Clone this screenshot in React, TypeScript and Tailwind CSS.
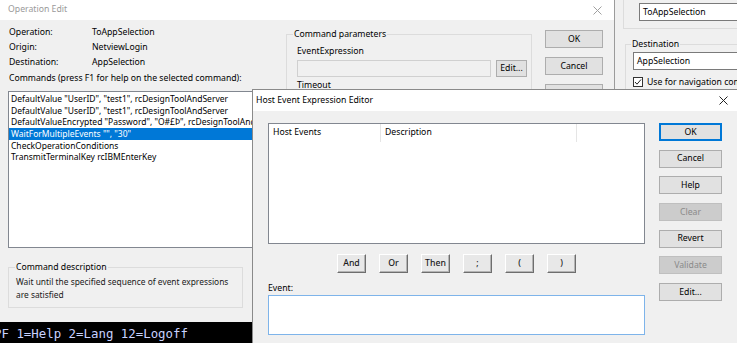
import React from "react";

const font = { fontFamily: '"Noto Sans", "Liberation Sans", sans-serif' };

function WinBtn({ label, w, disabled, def }: { label: string; w: string; disabled?: boolean; def?: boolean }) {
  const base = "h-[18px] flex items-center justify-center text-[8.7px] leading-none " + w + " ";
  if (disabled) return <div className={base + "bg-[#cccccc] border border-[#bfbfbf] text-[#8a8a8a]"}>{label}</div>;
  if (def) return <div className={base + "bg-[#e1e1e1] border-2 border-[#0078d7] text-black"}>{label}</div>;
  return <div className={base + "bg-[#e1e1e1] border border-[#adadad] text-black"}>{label}</div>;
}

function ClassicBtn({ label }: { label: string }) {
  return (
    <div className="w-[29px] h-[19px] flex items-center justify-center bg-[#e8e8e8] border-t border-l border-t-white border-l-white border-r border-b border-r-[#6e6e6e] border-b-[#6e6e6e] shadow-[inset_-1px_-1px_0_#b4b4b4] text-[8.7px] font-medium text-[#1a1a1a]">
      {label}
    </div>
  );
}

function CloseX({ color }: { color: string }) {
  return (
    <svg width="9" height="9" viewBox="0 0 9 9">
      <path d="M0.5 0.5 L8.5 8.5 M8.5 0.5 L0.5 8.5" stroke={color} strokeWidth="1" fill="none" />
    </svg>
  );
}

export default function App() {
  const items = [
    'DefaultValue "UserID", "test1", rcDesignToolAndServer',
    'DefaultValue "UserID", "test1", rcDesignToolAndServer',
    'DefaultValueEncrypted "Password", "O#£Þ", rcDesignToolAndServer',
    'WaitForMultipleEvents "", "30"',
    "CheckOperationConditions",
    "TransmitTerminalKey rcIBMEnterKey",
  ];
  return (
    <div className="relative w-[737px] h-[343px] overflow-hidden bg-black text-[8.7px]" style={font}>
      {/* terminal behind */}
      <div className="absolute inset-0 flex flex-col justify-end">
        <div
          className="h-[19px] leading-[19px] ml-[-6px] text-[12.4px] text-[#c8d2ff] whitespace-pre"
          style={{ fontFamily: '"DejaVu Sans Mono", "Liberation Mono", monospace' }}
        >
          PF 1=Help 2=Lang 12=Logoff
        </div>
      </div>

      {/* right properties panel */}
      <div className="absolute left-[615px] top-0 w-[122px] h-[89px] bg-[#f0f0f0] overflow-hidden">
        <div className="ml-[8px] w-[200px] h-[29px] border-l border-b border-[#dcdcdc] pl-[15px] pt-[3px]">
          <div className="h-[18px] border border-[#7a7a7a] bg-white leading-[16px] pl-[3px] text-black">ToAppSelection</div>
        </div>
        <fieldset className="ml-[10px] mt-[9px] w-[200px] h-[60px] border border-[#dcdcdc] pl-[7px]">
          <legend className="ml-[-2px] px-[1px] leading-[12px] text-black">Destination</legend>
          <div className="mt-[2px] h-[18px] border border-[#7a7a7a] bg-white leading-[16px] pl-[3px] text-black">AppSelection</div>
          <div className="mt-[6px] flex items-center gap-[4px]">
            <div className="w-[10px] h-[10px] border border-[#333] bg-white flex items-center justify-center">
              <svg width="8" height="8" viewBox="0 0 8 8">
                <path d="M1 4 L3 6.2 L7 1.5" stroke="#222" strokeWidth="1" fill="none" />
              </svg>
            </div>
            <span className="leading-[12px] text-black whitespace-nowrap">Use for navigation commands</span>
          </div>
        </fieldset>
      </div>

      {/* Operation Edit window */}
      <div className="absolute left-0 top-0 w-[615px] h-[322px] border-r border-[#9b9b9b] flex flex-col">
        <div className="h-[20px] bg-white flex items-center justify-between pl-[8px] text-[#9a9a9a]">
          <span>Operation Edit</span>
          <div className="w-[34px] flex justify-center">
            <CloseX color="#a0a0a0" />
          </div>
        </div>
        <div className="flex-1 bg-[#f0f0f0] flex text-black">
          {/* left column */}
          <div className="ml-[8px] w-[242px] flex flex-col pt-[5px]">
            {[
              ["Operation:", "ToAppSelection"],
              ["Origin:", "NetviewLogin"],
              ["Destination:", "AppSelection"],
            ].map(([a, b]) => (
              <div key={a} className="flex h-[15px] items-center pl-[1px]">
                <span className="w-[83px]">{a}</span>
                <span>{b}</span>
              </div>
            ))}
            <div className="mt-[2px] h-[14px] flex items-center pl-[1px] whitespace-nowrap">
              Commands (press F1 for help on the selected command):
            </div>
            <div className="mt-[5px] h-[157px] w-[250px] border border-[#828790] bg-white pt-[1px] overflow-hidden">
              {items.map((t, i) => (
                <div
                  key={i}
                  className={
                    "h-[11.7px] leading-[11.7px] pl-[2px] whitespace-nowrap text-[8.5px] " +
                    (i === 3 ? "bg-[#0078d7] text-white" : "text-black")
                  }
                >
                  {t}
                </div>
              ))}
            </div>
            <fieldset className="mt-[13px] w-[235px] h-[47px] border border-[#dcdcdc] pl-[7px]">
              <legend className="ml-[-1px] px-[1px] leading-[12px]">Command description</legend>
              <div className="mt-[2px] leading-[13px] text-[8.4px] text-[#1a1a1a]">
                Wait until the specified sequence of event expressions
                <br />
                are satisfied
              </div>
            </fieldset>
          </div>
          {/* middle group */}
          <fieldset className="ml-[36px] mt-[8px] w-[246px] h-[120px] border border-[#dcdcdc] pl-[10px] self-start">
            <legend className="ml-[-4px] px-[1px] leading-[12px]">Command parameters</legend>
            <div className="mt-[5px] h-[12px] leading-[12px]">EventExpression</div>
            <div className="mt-[3px] flex gap-[5px]">
              <div className="w-[194px] h-[17px] border border-[#d0d0d0] bg-[#f0f0f0]" />
              <div className="w-[31px] h-[17px] border border-[#adadad] bg-[#e1e1e1] flex items-center justify-center">Edit...</div>
            </div>
            <div className="mt-[2px] leading-[12px]">Timeout</div>
          </fieldset>
          {/* right buttons */}
          <div className="ml-[13px] mt-[10px] flex flex-col gap-[9px]">
            <WinBtn label="OK" w="w-[58px]" />
            <WinBtn label="Cancel" w="w-[58px]" />
            <WinBtn label="Help" w="w-[58px]" />
          </div>
        </div>
      </div>

      {/* Host Event Expression Editor */}
      <div className="absolute left-[252px] top-[89px] right-0 bottom-0 border-l border-t border-[#8a8a8a] flex flex-col">
        <div className="h-[21px] bg-white flex items-center justify-between pl-[3px] text-black">
          <span>Host Event Expression Editor</span>
          <div className="w-[28px] flex justify-center">
            <CloseX color="#222" />
          </div>
        </div>
        <div className="flex-1 bg-[#f0f0f0] flex text-black">
          <div className="ml-[15px] mt-[12px] w-[377px] flex flex-col">
            <div className="h-[121px] border border-[#828790] bg-white">
              <div className="flex h-[18px]">
                <div className="w-[112px] pl-[4px] flex items-center border-r border-[#e5e5e5]">Host Events</div>
                <div className="w-[196px] pl-[4px] flex items-center border-r border-[#e5e5e5]">Description</div>
              </div>
            </div>
            <div className="mt-[10px] flex justify-center gap-[13px]">
              {["And", "Or", "Then", ";", "(", ")"].map((l) => (
                <ClassicBtn key={l} label={l} />
              ))}
            </div>
            <div className="mt-[8px] h-[14px] leading-[14px]">Event:</div>
            <div className="h-[40px] border border-[#7eb4ea] bg-white" />
          </div>
          <div className="ml-[14px] mt-[12px] flex flex-col gap-[8.7px]">
            <WinBtn label="OK" w="w-[63px]" def />
            <WinBtn label="Cancel" w="w-[63px]" />
            <WinBtn label="Help" w="w-[63px]" />
            <WinBtn label="Clear" w="w-[63px]" disabled />
            <WinBtn label="Revert" w="w-[63px]" />
            <WinBtn label="Validate" w="w-[63px]" disabled />
            <WinBtn label="Edit..." w="w-[63px]" />
          </div>
        </div>
      </div>
    </div>
  );
}
